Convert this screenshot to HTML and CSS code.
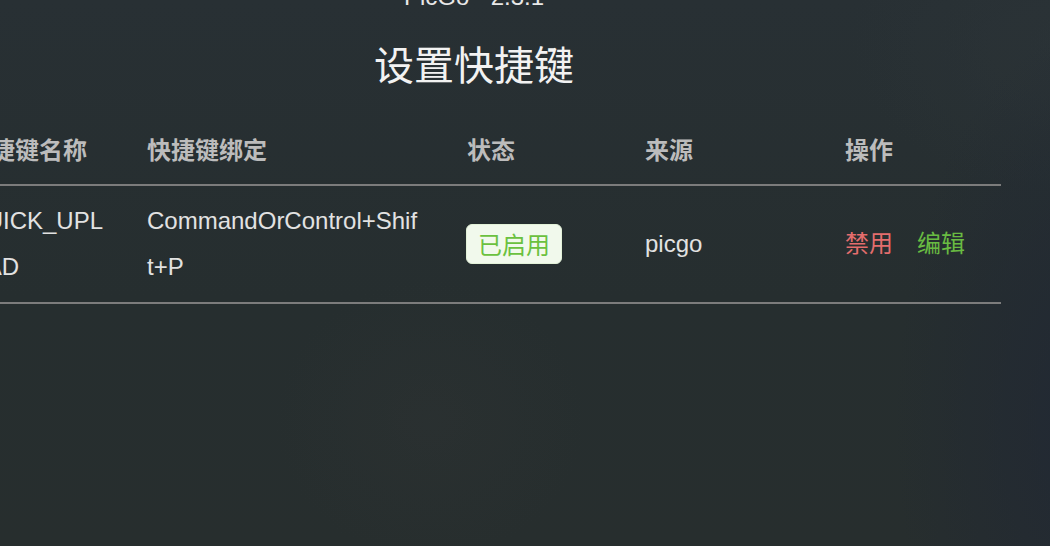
FILE: index.html
```html
<!DOCTYPE html>
<html lang="zh-CN">
<head>
<meta charset="utf-8">
<title>设置快捷键</title>
<link rel="stylesheet" href="styles.css">
</head>
<body>
<div class="view">
  <div class="version">PicGo - 2.3.1</div>
  <h1 class="title">设置快捷键</h1>
  <table class="shortcut-table">
    <colgroup>
      <col class="c-name">
      <col class="c-key">
      <col class="c-status">
      <col class="c-from">
      <col class="c-ops">
    </colgroup>
    <thead>
      <tr>
        <th>快捷键名称</th>
        <th class="key-cell">快捷键绑定</th>
        <th>状态</th>
        <th>来源</th>
        <th>操作</th>
      </tr>
    </thead>
    <tbody>
      <tr>
        <td>QUICK_UPLOAD</td>
        <td class="key-cell">CommandOrControl+Shift+P</td>
        <td><span class="tag">已启用</span></td>
        <td>picgo</td>
        <td>
          <div class="ops">
            <span class="op op-danger">禁用</span>
            <span class="op op-edit">编辑</span>
          </div>
        </td>
      </tr>
    </tbody>
  </table>
</div>
</body>
</html>
```

FILE: styles.css
```css
html, body {
  margin: 0;
  padding: 0;
}
body {
  width: 1050px;
  height: 546px;
  overflow: hidden;
  font-family: "Liberation Sans", "Noto Sans CJK SC", sans-serif;
  color: #e4e4e4;
  background:
    radial-gradient(ellipse 220px 200px at 430px 420px, rgba(48,52,52,0.35), rgba(48,52,52,0) 70%),
    radial-gradient(ellipse 260px 520px at 1090px 420px, rgba(33,40,52,0.9), rgba(33,40,52,0) 75%),
    radial-gradient(ellipse 300px 220px at 1060px 40px, rgba(44,52,56,0.6), rgba(44,52,56,0) 70%),
    linear-gradient(180deg, #283034 0%, #262e2f 55%, #272e2e 100%);
}
.view {
  width: 1054px;
  margin: -20px 0 0 -53px;
  text-align: center;
}
.version {
  font-size: 24px;
  line-height: 34px;
  color: #e8e8e8;
}
.title {
  margin: 29px 0 0;
  font-family: "Noto Sans CJK SC", sans-serif;
  font-weight: 400;
  font-size: 40px;
  line-height: 40px;
  color: #f2f2f2;
}
.shortcut-table {
  margin-top: 31px;
  width: 1054px;
  table-layout: fixed;
  border-collapse: collapse;
  text-align: left;
}
.c-name { width: 180px; }
.c-key { width: 320px; }
.c-status { width: 178px; }
.c-from { width: 200px; }
.c-ops { width: 176px; }
.shortcut-table th,
.shortcut-table td {
  padding: 12px 20px;
  font-size: 24px;
  line-height: 46px;
  vertical-align: middle;
  word-break: break-all;
  border-bottom: 2px solid #7c7c7c;
}
.shortcut-table th {
  padding-bottom: 12px;
  font-family: "Noto Sans CJK SC", sans-serif;
  font-weight: 700;
  color: #bcbcbc;
}
.shortcut-table td {
  color: #e2e2e2;
}
.shortcut-table .key-cell {
  padding-right: 26px;
}
.tag {
  display: block;
  width: fit-content;
  box-sizing: border-box;
  height: 40px;
  padding: 0 11px;
  margin-left: -1px;
  line-height: 38px;
  font-family: "Noto Sans CJK SC", sans-serif;
  font-size: 24px;
  color: #6bc13f;
  background: #f1f9ec;
  border: 1px solid #e2f1d8;
  border-radius: 6px;
}
.ops {
  display: flex;
  gap: 24px;
  padding-bottom: 4px;
  font-family: "Noto Sans CJK SC", sans-serif;
}
.op-danger { color: #e46d6d; }
.op-edit { color: #69bb42; }
```
